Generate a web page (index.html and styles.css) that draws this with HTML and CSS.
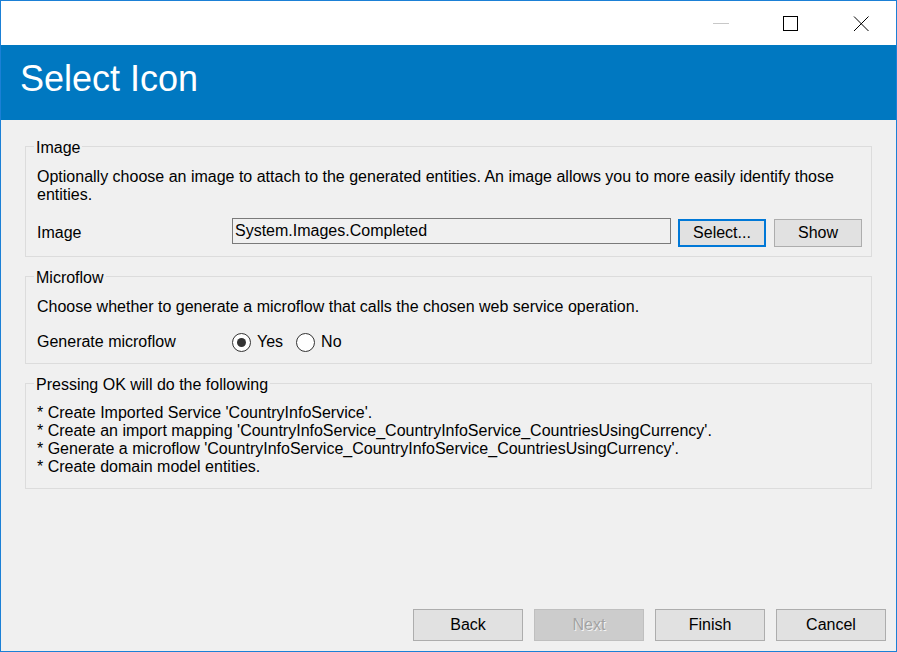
FILE: index.html
```html
<!DOCTYPE html>
<html>
<head>
<meta charset="utf-8">
<title>Select Icon</title>
<link rel="stylesheet" href="styles.css">
</head>
<body>
<div class="window">
  <div class="titlebar">
    <div class="tb-btn">
      <svg width="16" height="15" viewBox="0 0 16 15"><line x1="0" y1="7.5" x2="16" y2="7.5" stroke="#c8c8c8" stroke-width="1"/></svg>
    </div>
    <div class="tb-btn">
      <svg width="16" height="15" viewBox="0 0 16 15"><rect x="0.5" y="0.5" width="14" height="14" fill="none" stroke="#000" stroke-width="1"/></svg>
    </div>
    <div class="tb-btn">
      <svg width="16" height="15" viewBox="0 0 16 15"><path d="M1 0.5 L15.5 15 M15.5 0.5 L1 15" fill="none" stroke="#000" stroke-width="1"/></svg>
    </div>
  </div>
  <div class="header">Select Icon</div>
  <div class="main">
    <fieldset class="group group-image">
      <legend>Image</legend>
      <div class="desc">Optionally choose an image to attach to the generated entities. An image allows you to more easily identify those entities.</div>
      <div class="image-row">
        <div class="row-label label-offset">Image</div>
        <div class="textbox">System.Images.Completed</div>
        <div class="btn btn-small btn-focus">Select...</div>
        <div class="btn btn-small btn-show">Show</div>
      </div>
    </fieldset>
    <fieldset class="group group-micro">
      <legend>Microflow</legend>
      <div class="desc">Choose whether to generate a microflow that calls the chosen web service operation.</div>
      <div class="radio-row">
        <div class="row-label">Generate microflow</div>
        <div class="radio-opt">
          <span class="radio checked"></span><span>Yes</span>
        </div>
        <div class="radio-opt second">
          <span class="radio"></span><span>No</span>
        </div>
      </div>
    </fieldset>
    <fieldset class="group group-ok">
      <legend>Pressing OK will do the following</legend>
      <div class="list">
        <div>* Create Imported Service 'CountryInfoService'.</div>
        <div>* Create an import mapping 'CountryInfoService_CountryInfoService_CountriesUsingCurrency'.</div>
        <div>* Generate a microflow 'CountryInfoService_CountryInfoService_CountriesUsingCurrency'.</div>
        <div>* Create domain model entities.</div>
      </div>
    </fieldset>
  </div>
  <div class="footer">
    <div class="btn btn-big">Back</div>
    <div class="btn btn-big btn-disabled">Next</div>
    <div class="btn btn-big">Finish</div>
    <div class="btn btn-big">Cancel</div>
  </div>
</div>
</body>
</html>
```
FILE: styles.css
```css
html, body {
  margin: 0;
  padding: 0;
  background: #f0f0f0;
}

body {
  font-family: "Liberation Sans", Arial, sans-serif;
  font-size: 16px;
  line-height: 18px;
  color: #000;
}

.window {
  width: 897px;
  height: 652px;
  box-sizing: border-box;
  border: 1px solid #1b80d6;
  background: #f0f0f0;
  display: flex;
  flex-direction: column;
  overflow: hidden;
}

.titlebar {
  height: 44px;
  background: #fff;
  display: flex;
  justify-content: flex-end;
  flex: none;
}

.tb-btn {
  width: 70px;
  height: 44px;
  display: flex;
  align-items: center;
  justify-content: center;
}

.tb-btn svg {
  display: block;
}

.header {
  height: 75px;
  box-sizing: border-box;
  flex: none;
  background: #0078c1;
  color: #fff;
  font-size: 36px;
  line-height: 40px;
  padding: 14px 0 0 19px;
}

.main {
  flex: 1;
  padding: 0 24px;
}

.group {
  margin: 10px 0 0;
  border: 1px solid #dcdcdc;
  padding: 12px 11px 9px;
  min-width: 0;
}

.group-image {
  margin-top: 17px;
}

.group-micro {
  padding-bottom: 11px;
}

.group-ok {
  padding-top: 11px;
  padding-bottom: 12px;
}

.group legend {
  padding: 2px 2px 0;
  margin-left: -3px;
  line-height: 17px;
}

.image-row {
  display: flex;
  align-items: flex-start;
  margin-top: 14px;
}

.row-label {
  width: 195px;
  flex: none;
}

.label-offset {
  padding-top: 6px;
}

.textbox {
  width: 439px;
  height: 26px;
  box-sizing: border-box;
  border: 1px solid #7a7a7a;
  background: #f0f0f0;
  padding: 0 2px;
  line-height: 24px;
  flex: none;
}

.btn {
  box-sizing: border-box;
  background: #e1e1e1;
  border: 1px solid #adadad;
  text-align: center;
  flex: none;
}

.btn-small {
  width: 88px;
  height: 28px;
  line-height: 26px;
  margin-top: 1px;
}

.btn-focus {
  border: 2px solid #0078d7;
  line-height: 24px;
  margin-left: 7px;
}

.btn-show {
  margin-left: 8px;
}

.radio-row {
  display: flex;
  align-items: center;
  height: 20px;
  margin-top: 16px;
}

.radio-opt {
  display: flex;
  align-items: center;
}

.radio-opt.second {
  margin-left: 13px;
}

.radio {
  width: 19px;
  height: 19px;
  box-sizing: border-box;
  border: 1px solid #333;
  border-radius: 50%;
  background: #fff;
  margin-right: 6px;
  display: flex;
  align-items: center;
  justify-content: center;
}

.radio.checked::after {
  content: "";
  width: 9px;
  height: 9px;
  border-radius: 50%;
  background: #333;
}

.footer {
  flex: none;
  display: flex;
  justify-content: flex-end;
  gap: 11px;
  padding: 0 10px 10px 0;
}

.btn-big {
  width: 110px;
  height: 32px;
  line-height: 30px;
}

.btn-disabled {
  background: #cccccc;
  border-color: #bfbfbf;
  color: #a3a3a3;
  text-shadow: 1px 1px 0 #f4f4f4;
}
```
